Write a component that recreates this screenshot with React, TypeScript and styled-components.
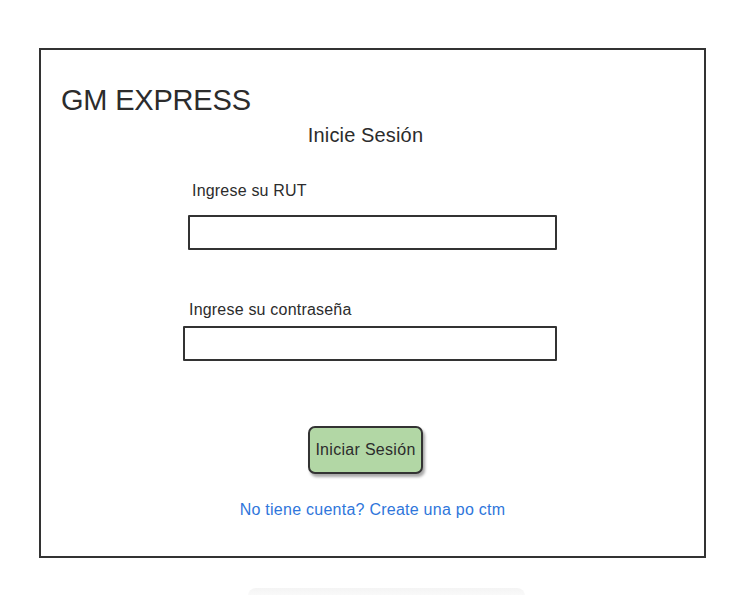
import React from "react";
import styled, { createGlobalStyle } from "styled-components";

const Global = createGlobalStyle`
  html, body { margin: 0; padding: 0; background: #ffffff; }
  body { font-family: "Liberation Sans", Arial, sans-serif; color: #2c2c2c; }
`;

const Frame = styled.div`
  box-sizing: border-box;
  width: 667px;
  height: 510px;
  margin: 48px 0 0 39px;
  border: 2px solid #333333;
  padding-top: 36px;
  display: flex;
  flex-direction: column;
  align-items: flex-start;
`;

const Brand = styled.h1`
  margin: 0 0 0 20px;
  font-size: 29px;
  line-height: 29px;
  letter-spacing: -0.2px;
  font-weight: 400;
  color: #2c2c2c;
`;

const Subtitle = styled.h2`
  margin: 10px 0 0 0;
  align-self: stretch;
  text-align: center;
  padding-right: 14px;
  font-size: 20px;
  line-height: 20px;
  letter-spacing: 0.15px;
  font-weight: 400;
  color: #2c2c2c;
`;

const Label = styled.label<{ $indent: number; $top: number }>`
  display: block;
  margin: ${(p) => p.$top}px 0 0 ${(p) => p.$indent}px;
  font-size: 16px;
  line-height: 16px;
  letter-spacing: 0.2px;
  color: #2c2c2c;
`;

const Field = styled.input<{ $indent: number; $top: number; $width: number }>`
  box-sizing: border-box;
  display: block;
  margin: ${(p) => p.$top}px 0 0 ${(p) => p.$indent}px;
  width: ${(p) => p.$width}px;
  height: 35px;
  border: 2px solid #333333;
  border-radius: 1px;
  background: #ffffff;
  outline: none;
  padding: 0 8px;
  font-family: inherit;
  font-size: 15px;
`;

const Button = styled.button`
  box-sizing: border-box;
  margin: 65px 0 0 267px;
  width: 115px;
  height: 48px;
  border: 2px solid #333333;
  border-radius: 7px;
  background: #b2d7a5;
  box-shadow: 2px 3px 3px rgba(0, 0, 0, 0.35);
  font-family: inherit;
  font-size: 16px;
  letter-spacing: 0.3px;
  color: #2c2c2c;
  padding: 0;
  cursor: pointer;
`;

const Link = styled.a`
  align-self: stretch;
  text-align: center;
  margin: 28px 0 0 0;
  font-size: 16px;
  line-height: 16px;
  letter-spacing: 0.25px;
  color: #2f76db;
  text-decoration: none;
`;

const Ghost = styled.div`
  margin: 30px 0 0 248px;
  width: 277px;
  height: 8px;
  border-radius: 8px 8px 0 0;
  background: linear-gradient(#f4f4f4, #fafafa);
`;

export default function App() {
  return (
    <>
      <Global />
      <Frame>
        <Brand>GM EXPRESS</Brand>
        <Subtitle>Inicie Sesión</Subtitle>
        <Label $indent={151} $top={38}>Ingrese su RUT</Label>
        <Field $indent={147} $top={16} $width={369} />
        <Label $indent={148} $top={52}>Ingrese su contraseña</Label>
        <Field $indent={142} $top={8} $width={374} type="password" />
        <Button>Iniciar Sesión</Button>
        <Link href="#">No tiene cuenta? Create una po ctm</Link>
      </Frame>
      <Ghost />
    </>
  );
}
